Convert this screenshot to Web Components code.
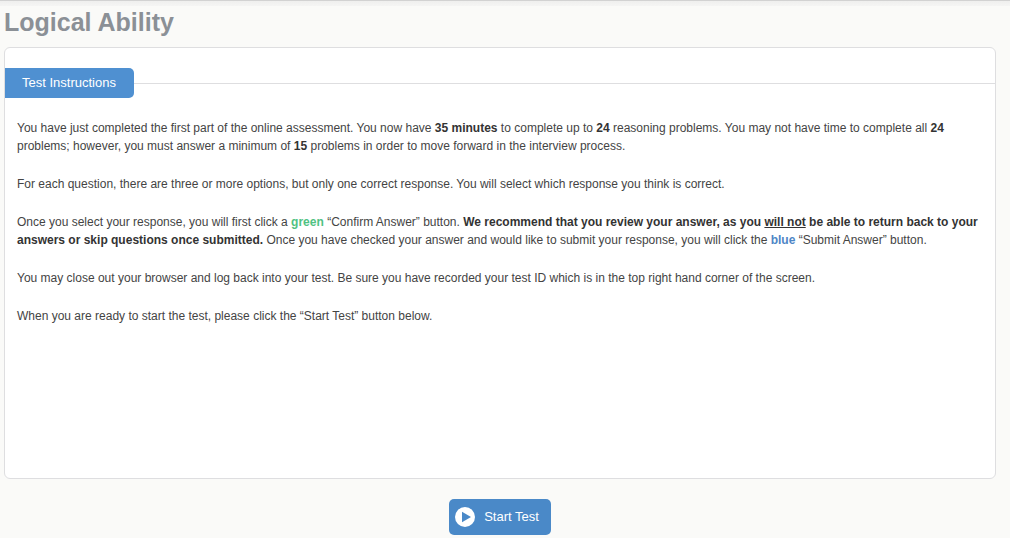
<!DOCTYPE html>
<html lang="en">
<head>
<meta charset="utf-8">
<title>Logical Ability</title>
<style>
  body { margin: 0; background: #fafaf8; font-family: "Liberation Sans", Arial, sans-serif; }
</style>
</head>
<body>
<assessment-page>
  <span slot="title">Logical Ability</span>
  <instruction-panel>
    <span slot="heading">Test Instructions</span>
    <instruction-text></instruction-text>
  </instruction-panel>
  <start-button slot="actions">Start Test</start-button>
</assessment-page>
<script>
  class BaseElement extends HTMLElement {
    constructor() {
      super();
      this.attachShadow({ mode: "open" }).innerHTML = this.constructor.markup;
    }
  }

  customElements.define("assessment-page", class extends BaseElement {
    static markup = `
      <style>
        :host { display: block; }
        .top { height: 6px; box-sizing: border-box; border-top: 1px solid #d2d2d2;
               background: linear-gradient(#efefee, #f5f5f4); }
        main { padding: 0 14px 0 4px; }
        h1 { margin: 0; height: 41px; font-size: 25px; line-height: 32px; color: #8b9096; }
        .actions { display: flex; justify-content: center; margin-top: 20px; }
      </style>
      <div class="top"></div>
      <main>
        <h1><slot name="title"></slot></h1>
        <slot></slot>
        <div class="actions"><slot name="actions"></slot></div>
      </main>`;
  });

  customElements.define("instruction-panel", class extends BaseElement {
    static markup = `
      <style>
        :host { display: block; box-sizing: border-box; min-height: 432px; padding-top: 20px;
                background: #fff; border: 1px solid #dedee0; border-radius: 6px; }
        header { display: flex; align-items: center; }
        header::after { content: ""; flex: 1; height: 1px; background: #dedee0; }
        h2 { margin: 0; padding: 0 18px 0 17px; font-size: 13px; font-weight: normal; line-height: 30px;
             color: #fff; background: #4f90d1; border-radius: 0 5px 5px 0; }
        .content { padding: 21px 12px 0; }
      </style>
      <header><h2><slot name="heading"></slot></h2></header>
      <div class="content"><slot></slot></div>`;
  });

  customElements.define("instruction-text", class extends BaseElement {
    static markup = `
      <style>
        :host { display: block; font-size: 12px; line-height: 18px; color: #444; }
        p { margin: 0 0 20px; }
        b { color: #333; }
        .green { color: #4fc283; }
        .blue { color: #4e86c6; }
      </style>
      <p>You have just completed the first part of the online assessment. You now have <b>35 minutes</b> to complete up to <b>24</b> reasoning problems. You may not have time to complete all <b>24</b> problems; however, you must answer a minimum of <b>15</b> problems in order to move forward in the interview process.</p>
      <p>For each question, there are three or more options, but only one correct response. You will select which response you think is correct.</p>
      <p>Once you select your response, you will first click a <b class="green">green</b> “Confirm Answer” button. <b>We recommend that you review your answer, as you <u>will not</u> be able to return back to your answers or skip questions once submitted.</b> Once you have checked your answer and would like to submit your response, you will click the <b class="blue">blue</b> “Submit Answer” button.</p>
      <p>You may close out your browser and log back into your test. Be sure you have recorded your test ID which is in the top right hand corner of the screen.</p>
      <p>When you are ready to start the test, please click the “Start Test” button below.</p>`;
  });

  customElements.define("start-button", class extends BaseElement {
    static markup = `
      <style>
        :host { display: block; }
        button { display: flex; align-items: center; gap: 9px; height: 36px; padding: 0 12px 0 6px;
                 border: 0; border-radius: 5px; background: #4a89c8; color: #fff;
                 font: 13px/18px "Liberation Sans", Arial, sans-serif; cursor: pointer; }
        svg { display: block; }
      </style>
      <button type="button">
        <svg width="20" height="20" viewBox="0 0 20 20" aria-hidden="true">
          <circle cx="10" cy="10" r="10" fill="#fff"/>
          <path d="M7 4.8 16 10 7 15.2z" fill="#4a89c8"/>
        </svg>
        <span><slot></slot></span>
      </button>`;
  });
</script>
</body>
</html>
